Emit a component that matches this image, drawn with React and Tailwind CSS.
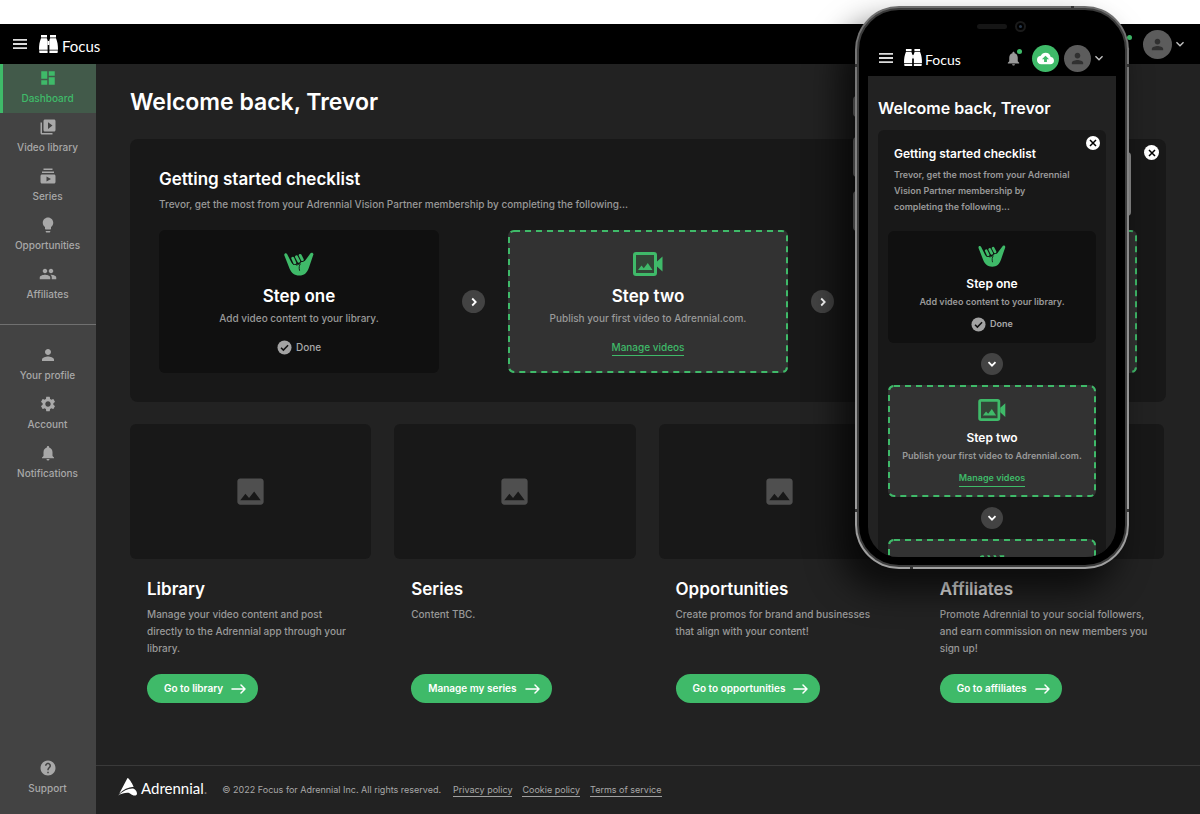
import {
  MdCloudUpload,
  MdDashboard,
  MdExpandMore,
  MdGroup,
  MdHelp,
  MdImage,
  MdLightbulb,
  MdMovie,
  MdNotifications,
  MdPerson,
  MdSettings,
  MdSubscriptions,
  MdVideoLibrary,
} from "react-icons/md";
import clsx from "clsx";

const mainNav = [
  { label: "Dashboard", icon: MdDashboard, active: true },
  { label: "Video library", icon: MdVideoLibrary },
  { label: "Series", icon: MdSubscriptions },
  { label: "Opportunities", icon: MdLightbulb },
  { label: "Affiliates", icon: MdGroup },
];

const accountNav = [
  { label: "Your profile", icon: MdPerson },
  { label: "Account", icon: MdSettings },
  { label: "Notifications", icon: MdNotifications },
];

const steps = [
  {
    title: "Step one",
    text: "Add video content to your library.",
    icon: ShakaIcon,
    done: true,
  },
  {
    title: "Step two",
    text: "Publish your first video to Adrennial.com.",
    icon: VideoImageIcon,
    link: "Manage videos",
  },
  // Locked until step two is done, so only its icon shows
  { icon: ClapperIcon, locked: true },
];

const sections = [
  {
    title: "Library",
    text: "Manage your video content and post directly to the Adrennial app through your library.",
    action: "Go to library",
  },
  { title: "Series", text: "Content TBC.", action: "Manage my series" },
  {
    title: "Opportunities",
    text: "Create promos for brand and businesses that align with your content!",
    action: "Go to opportunities",
  },
  {
    title: "Affiliates",
    text: "Promote Adrennial to your social followers, and earn commission on new members you sign up!",
    action: "Go to affiliates",
  },
];

function ShakaIcon({ className }) {
  return (
    <svg viewBox="0 0 30 24" className={className} fill="none">
      <path
        d="M.3 3.200C-.2 1.200 2.400.4 3.200 2.200L7.400 10.500c1.200 2 2.400 2.800 4.400 2.300l3-.9c1.800-1.900 3.800-2.200 6-2.900L26.300 1.600c.7-1.700 3.600-.9 3.100 1L24.800 16c-1.800 5-4.600 7.600-9.500 7.600S7.400 21 5.500 16.600z"
        fill="#3fba69"
      />
      <path
        d="m8.700 6.200 2.100 4.600M12.500 4.800l2.200 4.400M16.200 3.400l2.100 4.200"
        stroke="#111"
        strokeWidth="4.400"
        strokeLinecap="round"
      />
      <path
        d="m8.700 6.200 2.100 4.600M12.500 4.800l2.200 4.400M16.200 3.400l2.100 4.200"
        stroke="#3fba69"
        strokeWidth="2.900"
        strokeLinecap="round"
      />
      <path
        d="M12.400 13c1.500 0 2.400-.6 3.400-1.500M16.300 11.900c-1.200 1.600-1.500 3.700-.8 6.500"
        stroke="#111"
        strokeWidth=".9"
        strokeLinecap="round"
      />
    </svg>
  );
}

function VideoImageIcon({ className }) {
  return (
    <svg viewBox="0 0 30 24" className={className}>
      <rect
        x="1.500"
        y="1.500"
        width="21"
        height="21"
        rx="1.500"
        fill="#334637"
        stroke="#3fba69"
        strokeWidth="3"
      />
      <path
        d="M24 9.500 29.500 4.500v15L24 14.500zM5 18l3.500-4.500 2.300 2.700 4-5.200L19.500 18z"
        fill="#3fba69"
      />
    </svg>
  );
}

function ClapperIcon({ className }) {
  return (
    <svg viewBox="0 0 30 24" className={className}>
      <MdMovie x="-1" y="-3" size="32" color="#3fba69" />
    </svg>
  );
}

function MenuButton({ className }) {
  return (
    <button
      aria-label="Menu"
      className={clsx("flex text-[#dcdcdc]", className)}>
      <svg viewBox="0 0 14 10" className="h-[10px] w-[14px]" fill="currentColor">
        <path d="M0 0h14v1.800H0zM0 4.100h14v1.800H0zM0 8.200h14V10H0z" />
      </svg>
    </button>
  );
}

function Logo({ compact }) {
  return (
    <a
      href="#home"
      className={clsx(
        "flex items-end font-[Lato,sans-serif] leading-none text-white",
        compact ? "gap-[3px] text-[14px]" : "gap-1 text-[15px]",
      )}>
      <svg
        viewBox="0 0 19 18"
        className={clsx(
          "mb-px",
          compact ? "h-[17px] w-[18px]" : "h-[18px] w-[19px]",
        )}
        fill="#fff">
        <path d="M2 0h6v2.400H2zM11 0h6v2.400h-6zM2 3.200h5.800l.8 2v9.500H0c0-4.800.5-7.800 2-11.500zM11.200 3.200H17c1.500 3.700 2 6.700 2 11.500h-8.600V5.200zM.1 15.500h8.500V18H.5zM10.400 15.500h8.500l-.4 2.500h-8.100z" />
        <path d="M8.500 6h2v4h-2z" />
      </svg>
      Focus
    </a>
  );
}

function Avatar({ compact }) {
  return (
    <button
      aria-label="Account menu"
      className="flex items-center text-[#c4c4c4]">
      <span
        className={clsx(
          "flex items-center justify-center rounded-full bg-[#5c5c5c] text-[#303030]",
          compact ? "size-[27px]" : "size-[29px]",
        )}>
        <MdPerson size={17} />
      </span>
      <MdExpandMore size={16} />
    </button>
  );
}

function Bell() {
  return (
    <button
      aria-label="Notifications"
      className="relative flex text-[#9a9a9a]">
      <MdNotifications size={17} />
      <span className="absolute -top-px right-0 size-[5px] rounded-full bg-[#3fba69]" />
    </button>
  );
}

function NavItem({ item }) {
  const Icon = item.icon;
  return (
    <a
      href="#nav"
      className={clsx(
        "flex h-[49px] flex-col items-center border-l-3 pt-[5px] pr-1",
        item.active
          ? "border-[#3fba69] bg-[#425a4a] text-[#3fba69]"
          : "border-transparent text-[#a8a8a8]",
      )}>
      <Icon size={18} />
      <span className="mt-1 text-[10px] leading-[14px] font-medium whitespace-nowrap">
        {item.label}
      </span>
    </a>
  );
}

function CloseButton({ className }) {
  return (
    <button
      aria-label="Close checklist"
      className={clsx(
        "absolute flex items-center justify-center rounded-full bg-white text-black",
        className,
      )}>
      <svg
        viewBox="0 0 8 8"
        className="size-2"
        stroke="currentColor"
        strokeWidth="1.500">
        <path d="m1 1 6 6M7 1 1 7" />
      </svg>
    </button>
  );
}

function Arrow({ down }) {
  return (
    <span
      className={clsx(
        "flex shrink-0 items-center justify-center self-center rounded-full bg-[#434343] text-white",
        down ? "my-[10px] size-[22px]" : "mx-[23px] size-[23px]",
      )}>
      <svg
        viewBox="0 0 10 10"
        className={clsx("size-[10px]", down && "rotate-90")}
        fill="none"
        stroke="currentColor"
        strokeWidth="1.800">
        <path d="m3.200 1.500 3.500 3.500-3.500 3.500" />
      </svg>
    </span>
  );
}

function StepCard({ step, compact }) {
  const Icon = step.icon;
  return (
    <div
      className={clsx(
        "relative flex flex-col items-center rounded-md text-center",
        step.done ? "bg-[#101010]" : "bg-[#323232]",
        compact ? "h-[112px] shrink-0 pt-[14px]" : "h-[143px] flex-1 pt-[22px]",
      )}>
      {!step.done && (
        <svg className="absolute inset-0 size-full" fill="none">
          <rect
            x="1"
            y="1"
            rx="5"
            className="h-[calc(100%-2px)] w-[calc(100%-2px)]"
            stroke="#3fba69"
            strokeWidth="2"
            strokeDasharray="6 5"
          />
        </svg>
      )}
      <Icon className={compact ? "h-[22px] w-7" : "h-6 w-[30px]"} />
      {!step.locked && (
        <>
          <h3
            className={clsx(
              "font-semibold text-white",
              compact
                ? "mt-[7px] text-[12px] leading-5"
                : "mt-2 text-[17px] leading-6",
            )}>
            {step.title}
          </h3>
          <p
            className={clsx(
              "leading-4 whitespace-nowrap text-[#999]",
              compact
                ? "text-[9px] font-semibold"
                : "mt-0.5 text-[10px] font-medium",
            )}>
            {step.text}
          </p>
          <div
            className={clsx(
              "relative flex h-4 items-center",
              compact
                ? "mt-1.5 text-[9px] font-semibold"
                : "mt-[13px] text-[10px] font-medium",
            )}>
            {step.done ? (
              <span className="flex items-center gap-1 text-[#a8a8a8]">
                <svg viewBox="0 0 16 16" className="size-[15px]" fill="none">
                  <circle cx="8" cy="8" r="7.500" fill="#a3a3a3" />
                  <path
                    d="m4.300 8.300 2.500 2.500 5-5.200"
                    stroke="#111"
                    strokeWidth="1.600"
                  />
                </svg>
                Done
              </span>
            ) : (
              <a
                href="#videos"
                className="border-b border-[#3fba69] leading-4 text-[#3fba69]">
                {step.link}
              </a>
            )}
          </div>
        </>
      )}
    </div>
  );
}

function Phone() {
  return (
    <div className="absolute top-[6px] right-[71px] h-[563px] w-[274px]">
      {/* Side buttons */}
      <span className="absolute top-[90px] -left-[2px] h-[21px] w-1 rounded-l-sm bg-[#8a8a8a]" />
      <span className="absolute top-[131px] -left-[2px] h-10 w-1 rounded-l-sm bg-[#8a8a8a]" />
      <span className="absolute top-[185px] -left-[2px] h-10 w-1 rounded-l-sm bg-[#8a8a8a]" />
      <span className="absolute top-[146px] -right-[2px] h-16 w-1 rounded-r-sm bg-[#8a8a8a]" />

      <div className="relative h-full rounded-[44px] bg-[linear-gradient(#6e6e6e,#858585_30%,#a0a0a0)] p-[2px] shadow-[-14px_20px_32px_2px_rgba(0,0,0,0.65)]">
        {/* Antenna bands */}
        <span className="absolute top-[58px] left-0 h-[3px] w-full bg-[#333]" />
        <span className="absolute top-[503px] left-0 h-[3px] w-full bg-[#333]" />
        <span className="absolute top-0 right-[55px] h-1 w-[3px] bg-[#333]" />
        <span className="absolute bottom-0 left-[55px] h-1 w-[3px] bg-[#333]" />

        <div className="relative h-full overflow-hidden rounded-[42px] border-2 border-[#3c3c3c] bg-black px-[9px]">
          {/* Speaker and camera */}
          <div className="flex h-8 items-center justify-center gap-2 pl-[19px]">
            <span className="h-[5px] w-[30px] rounded-full bg-[#151515]" />
            <span className="flex size-[11px] items-center justify-center rounded-full border-2 border-[#1a1a1a]">
              <span className="size-[3px] rounded-full bg-[#26364a]" />
            </span>
          </div>

          <div className="flex h-[34px] items-center pr-[9px] pb-0.5 pl-[11px]">
            <MenuButton className="mr-[11px]" />
            <Logo compact />
            <div className="ml-auto flex items-center gap-[5px]">
              <span className="mr-[5px]">
                <Bell />
              </span>
              <button
                aria-label="Upload"
                className="flex size-[27px] items-center justify-center rounded-full bg-[#3fba69] text-white">
                <MdCloudUpload size={17} />
              </button>
              <Avatar compact />
            </div>
          </div>

          <div className="h-[481px] overflow-hidden rounded-b-[30px] bg-[#222] px-[10px] pt-[22px]">
            <h2 className="text-[16px] leading-5 font-semibold whitespace-nowrap text-white">
              Welcome back, Trevor
            </h2>
            <section className="relative mt-3 flex flex-col rounded-md bg-[#181818] px-[10px] pt-[14px]">
              <CloseButton className="top-1.5 right-1.5 size-[14px]" />
              <h3 className="px-1.5 text-[12px] leading-5 font-semibold text-white">
                Getting started checklist
              </h3>
              <p className="mt-[3px] mb-4 px-1.5 text-[9px] leading-4 font-semibold text-[#999]">
                Trevor, get the most from your Adrennial
                <br />
                Vision Partner membership by
                <br />
                completing the following...
              </p>
              <StepCard step={steps[0]} compact />
              <Arrow down />
              <StepCard step={steps[1]} compact />
              <Arrow down />
              <StepCard step={steps[2]} compact />
            </section>
          </div>
        </div>
      </div>
    </div>
  );
}

function Footer() {
  return (
    <footer className="flex h-[49px] items-center border-t border-[#3a3a3a] px-[22px] text-[9px] text-[#a8a8a8]">
      <a
        href="#adrennial"
        className="mb-1.5 flex items-end gap-1 font-[Lato,sans-serif] text-[15px] leading-4 text-white">
        <svg viewBox="0 0 19 18" className="h-[18px] w-[19px]" fill="#fff">
          <path d="M9.500 0c1.400 0 4.200 4.600 6.200 8.700C10 9 5.200 11.500 1.200 15.800zM0 17.600c5-4.800 9.800-7.200 14.200-7.200 2.800 0 4.800 2.800 4.800 5.100 0 1.400-.9 2.100-2.300 2.100-3.600 0-3.500-2.800-7.500-2.800-2.800 0-5.800 1-9.200 2.800z" />
        </svg>
        <span>
          Adrennial<span className="text-[#777]">.</span>
        </span>
      </a>
      <span className="ml-[15px]">
        © 2022 Focus for Adrennial Inc. All rights reserved.
      </span>
      <nav className="ml-3 flex gap-[10px]">
        <a href="#privacy" className="border-b border-[#a0a0a0]">
          Privacy policy
        </a>
        <a href="#cookies" className="border-b border-[#a0a0a0]">
          Cookie policy
        </a>
        <a href="#terms" className="border-b border-[#a0a0a0]">
          Terms of service
        </a>
      </nav>
    </footer>
  );
}

export default function App() {
  return (
    <div className="relative flex min-h-screen flex-col overflow-hidden bg-white pt-6 font-[Inter,sans-serif]">
      <header className="flex h-10 items-center bg-black pr-3 pl-[13px]">
        <MenuButton className="mr-3" />
        <Logo />
        <div className="ml-auto flex items-center gap-[11px]">
          <Bell />
          <Avatar />
        </div>
      </header>

      <div className="flex flex-1">
        <aside className="flex w-24 shrink-0 flex-col bg-[#434343] pb-[11px]">
          <nav>
            {mainNav.map((item) => (
              <NavItem key={item.label} item={item} />
            ))}
          </nav>
          <nav className="mt-[15px] border-t border-[#707070] pt-4">
            {accountNav.map((item) => (
              <NavItem key={item.label} item={item} />
            ))}
          </nav>
          <div className="mt-auto">
            <NavItem item={{ label: "Support", icon: MdHelp }} />
          </div>
        </aside>

        <div className="flex min-w-0 flex-1 flex-col bg-[#222]">
          <main className="flex-1 px-[34px] pt-6 pb-10">
            <h1 className="text-[23px] leading-7 font-semibold text-white">
              Welcome back, Trevor
            </h1>

            <section className="relative mt-[23px] rounded-lg bg-[#181818] px-[29px] pt-7 pb-[29px]">
              <CloseButton className="top-1.5 right-[7px] size-[15px]" />
              <h2 className="text-[17px] leading-6 font-semibold text-white">
                Getting started checklist
              </h2>
              <p className="mt-[5px] text-[10px] leading-4 font-medium text-[#999]">
                Trevor, get the most from your Adrennial Vision Partner
                membership by completing the following...
              </p>
              <div className="mt-[18px] flex">
                <StepCard step={steps[0]} />
                <Arrow />
                <StepCard step={steps[1]} />
                <Arrow />
                <StepCard step={steps[2]} />
              </div>
            </section>

            <div className="mt-[22px] grid grid-cols-4 gap-[23px] pr-0.5">
              {sections.map((section) => (
                <section key={section.title}>
                  <div className="flex h-[135px] items-center justify-center rounded-md bg-[#181818] text-[#4f4f4f]">
                    <MdImage size={35} />
                  </div>
                  <div className="pt-[18px] pr-3 pl-[17px]">
                    <h2 className="text-[17px] leading-6 font-semibold text-white">
                      {section.title}
                    </h2>
                    <p className="mt-[5px] min-h-[51px] text-[10px] leading-[17px] font-medium text-[#999]">
                      {section.text}
                    </p>
                    <button className="mt-[17px] flex h-[29px] items-center gap-2 rounded-full bg-[#3fba69] pr-3 pl-[17px] text-[10px] font-semibold whitespace-nowrap text-white">
                      {section.action}
                      <svg
                        viewBox="0 0 15 10"
                        className="h-[10px] w-[15px]"
                        fill="none"
                        stroke="currentColor"
                        strokeWidth="1.500"
                        strokeLinecap="round"
                        strokeLinejoin="round">
                        <path d="M1 5h13M10 1l4 4-4 4" />
                      </svg>
                    </button>
                  </div>
                </section>
              ))}
            </div>
          </main>
          <Footer />
        </div>
      </div>

      <Phone />
    </div>
  );
}
